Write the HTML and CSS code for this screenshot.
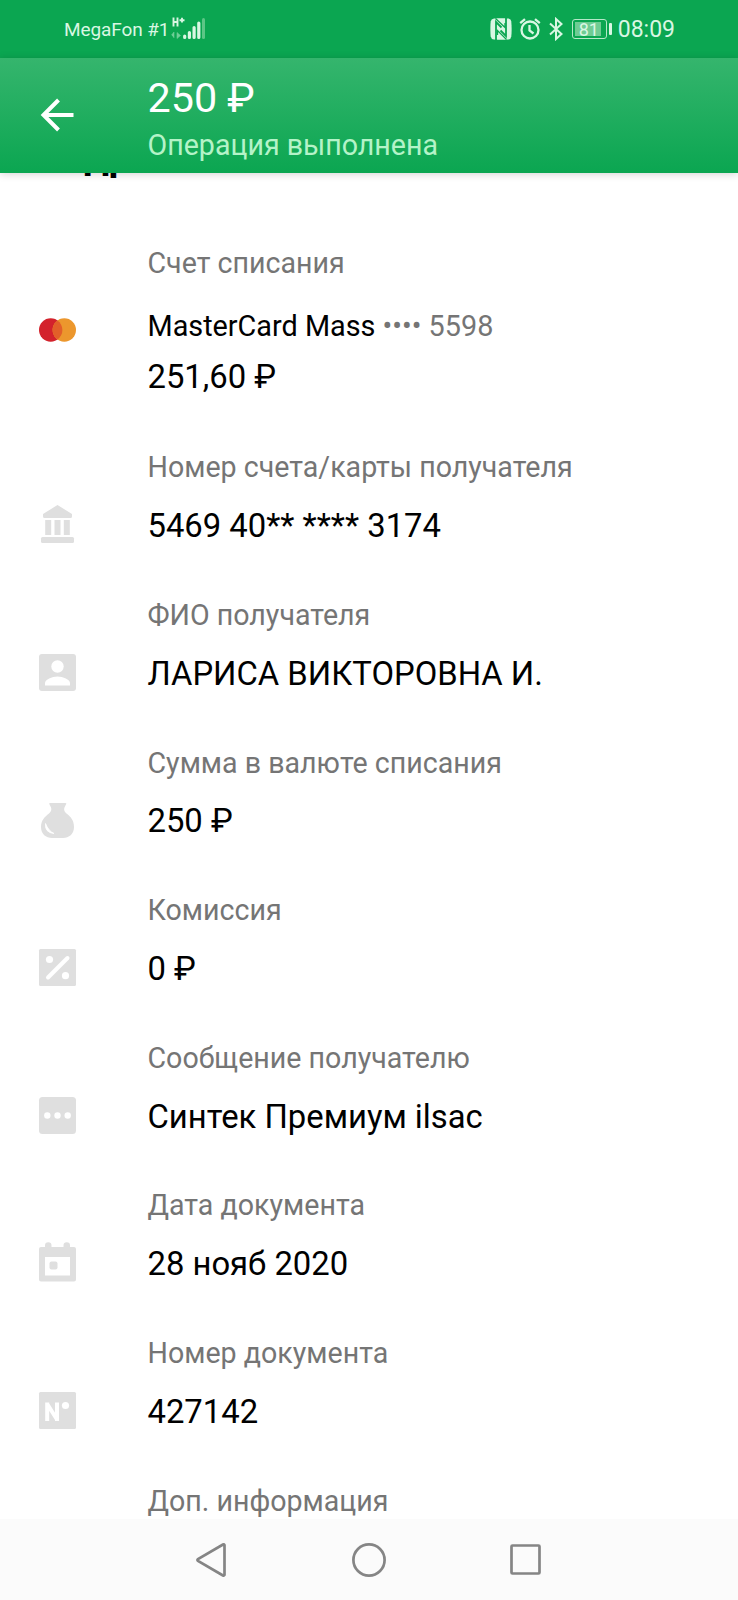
FILE: index.html
```
<!DOCTYPE html>
<html lang="ru">

<head>
    <meta charset="UTF-8">
    <meta name="viewport" content="width=device-width, initial-scale=1.0">
    <title>Операция выполнена</title>
    <link rel="stylesheet" href="styles.css">
</head>

<body>
    <div class="status-bar">
        <div class="carrier">MegaFon #1</div>
        <svg class="signal" width="36" height="24" viewBox="0 0 36 24">
            <path d="M2.500 .500v9M6.500 .500v9M2.500 5h4M8.500 3.200h5M11 .800v4.800" fill="none" stroke="#d9f7e3" stroke-width="1.900" />
            <path d="M.500 18l2.500-3v6M6 15.500v6l3.500-3z" fill="#6fcf97" stroke="#6fcf97" stroke-width=".6" />
            <path d="M13.700 20.500v-1.500M18.400 20.500v-5M23.100 20.500v-10M27.800 20.500v-14.500" fill="none" stroke="#d9f7e3" stroke-width="3.200" stroke-linecap="round" />
            <path d="M32.500 20.500v-18" stroke="#5cc686" stroke-width="3" stroke-linecap="round" />
        </svg>
        <div class="status-right">
            <svg width="22" height="22" viewBox="0 0 22 22">
                <path d="M4 0.500C8 0 15 0 18.500 .500Q21 1 21.300 3.500Q22 11 21.300 18.500Q21 21 18.500 21.500Q12 22 4 21.500Q1 21 .700 18.500Q0 11 .700 3.500Q1 1 4 .500z" fill="#d9f7e3" />
                <path d="M6 22V4L11.500 9.500M16 0V18L10.500 12.500" fill="none" stroke="#0ba651" stroke-width="1.800" />
                <path d="M5.500 .500L15 9.500V5M16.500 21.500L7.500 12.500V17" fill="none" stroke="#0ba651" stroke-width="1.300" />
            </svg>
            <svg width="22" height="22" viewBox="0 0 22 22" fill="none" stroke="#d9f7e3" stroke-width="2.300">
                <circle cx="11" cy="12" r="8.500" />
                <path d="M10.500 7v5.500l4 3M1.200 5.200L6 1.200M20.800 5.200L16 1.200" />
            </svg>
            <svg width="16" height="24" viewBox="0 0 16 24" fill="none" stroke="#d9f7e3" stroke-width="2">
                <path d="M2 6.500L13.500 17L8 22V2L13.500 7L2 17.500" />
            </svg>
            <div class="battery">
                <div class="battery-body"><span class="battery-level">81</span></div>
                <div class="battery-cap"></div>
            </div>
            <div class="time">08:09</div>
        </div>
    </div>

    <div class="header">
        <svg class="back" width="36" height="36" viewBox="0 0 36 36" fill="none" stroke="#fff" stroke-width="4">
            <path d="M34.500 18H5M19.500 3L4.500 18L19.500 33" />
        </svg>
        <div>
            <div class="header-sum">250 ₽</div>
            <div class="header-state">Операция выполнена</div>
        </div>
    </div>

    <div class="content">
        <h2>Подробности</h2>

        <div class="row row-card">
            <div class="label">Счет списания</div>
            <svg class="icon" width="38" height="38" viewBox="0 0 38 38">
                <circle cx="11.700" cy="19" r="11.700" fill="#d3222c" />
                <circle cx="25.300" cy="19" r="11.700" fill="#ec972d" />
                <path d="M18.500 9.480a11.700 11.700 0 0 1 0 19.040a11.700 11.700 0 0 1 0-19.040z" fill="#e25f29" />
            </svg>
            <div class="card-name">MasterCard Mass <span class="card-number">•••• 5598</span></div>
            <div class="value">251,60 ₽</div>
        </div>

        <div class="row">
            <div class="label">Номер счета/карты получателя</div>
            <svg class="icon" width="38" height="38" viewBox="0 0 38 38">
                <path d="M18.500-1L33 8v2.500q0 1.500-1.500 1.500h-26Q4 12 4 10.500V8zM6.200 14h6v15h-6zM15.500 14h6v15h-6zM24.800 14h6v15h-6z" />
                <rect x="2" y="31" width="33" height="6" rx="1.500" />
            </svg>
            <div class="value">5469 40** **** 3174</div>
        </div>

        <div class="row">
            <div class="label">ФИО получателя</div>
            <svg class="icon" width="38" height="38" viewBox="0 0 38 38">
                <rect width="37" height="37" rx="3" />
                <circle class="hole" cx="18.500" cy="12.500" r="6.200" />
                <path class="hole" d="M6 31.500v-2.500c0-3.500 7-6.500 12.500-6.500s12.500 3 12.500 6.500v2.500z" />
            </svg>
            <div class="value">ЛАРИСА ВИКТОРОВНА И.</div>
        </div>

        <div class="row">
            <div class="label">Сумма в валюте списания</div>
            <svg class="icon" width="38" height="38" viewBox="0 0 38 38">
                <path d="M11 2h15.500q1.500 0 .500 1.500c-2.500 4-2.500 6 .500 9C32 16 35 19.500 35 26c0 7-5 11-11 11H13C7 37 2 33 2 26c0-6.500 3.500-10 8-13.500c3-3 3-5 .500-9Q9.500 2 11 2z" />
                <path class="hole" d="M6.500 22.500q-1 9 8.500 10q-5.500-2.500-8.500-10z" stroke="#fff" stroke-width=".8" />
            </svg>
            <div class="value">250 ₽</div>
        </div>

        <div class="row">
            <div class="label">Комиссия</div>
            <svg class="icon" width="38" height="38" viewBox="0 0 38 38">
                <rect width="37" height="37" rx="1.500" />
                <circle class="hole" cx="10.500" cy="10.500" r="3.600" />
                <circle class="hole" cx="26.500" cy="26.700" r="3.600" />
                <path d="M9 28.500L28.500 9" stroke="#fff" stroke-width="4" stroke-linecap="round" />
            </svg>
            <div class="value">0 ₽</div>
        </div>

        <div class="row">
            <div class="label">Сообщение получателю</div>
            <svg class="icon" width="38" height="38" viewBox="0 0 38 38">
                <rect width="37" height="37" rx="3.500" />
                <circle class="hole" cx="8.300" cy="18.500" r="3.200" />
                <circle class="hole" cx="18.500" cy="18.500" r="3.200" />
                <circle class="hole" cx="28.700" cy="18.500" r="3.200" />
            </svg>
            <div class="value">Синтек Премиум ilsac</div>
        </div>

        <div class="row">
            <div class="label">Дата документа</div>
            <svg class="icon" width="38" height="38" viewBox="0 0 38 38">
                <path d="M6 3V1.500a3 3 0 0 1 6.500 0V3h12V1.500a3 3 0 0 1 6.500 0V3h4q2 0 2 2v30.500q0 2-2 2H2q-2 0-2-2V5q0-2 2-2z" />
                <path class="hole" d="M6 13h25v18.500h-25z" />
                <rect x="10.500" y="17.500" width="8" height="8" rx="2" />
            </svg>
            <div class="value">28 нояб 2020</div>
        </div>

        <div class="row">
            <div class="label">Номер документа</div>
            <svg class="icon" width="38" height="38" viewBox="0 0 38 38">
                <rect width="37" height="37" rx="1.500" />
                <path d="M8.200 29V10.500M18 29V10.500M8.200 12L18 27.500" fill="none" stroke="#fff" stroke-width="4" />
                <circle class="hole" cx="26.500" cy="13.500" r="3.600" />
            </svg>
            <div class="value">427142</div>
        </div>

        <div class="row">
            <div class="label">Доп. информация</div>
        </div>
    </div>

    <div class="nav-bar">
        <svg width="36" height="36" viewBox="0 0 36 36">
            <path d="M29.500 3v30q-.500 1-1.500.500L3 19q-1.200-1 0-2L28 2.500q1-.500 1.500.500z" />
        </svg>
        <svg width="36" height="36" viewBox="0 0 36 36">
            <circle cx="18" cy="18" r="15.600" />
        </svg>
        <svg width="36" height="36" viewBox="0 0 36 36">
            <rect x="3.500" y="3.500" width="28" height="28" rx="1" />
        </svg>
    </div>
</body>

</html>
```
FILE: styles.css
```
* {
    box-sizing: border-box;
}

body {
    margin: 0;
    height: 1600px;
    display: flex;
    flex-direction: column;
    overflow: hidden;
    background: #fff;
    font-family: Roboto, "Noto Sans", sans-serif;
}

svg {
    display: block;
    flex-shrink: 0;
}

.status-bar {
    height: 58px;
    flex-shrink: 0;
    display: flex;
    align-items: center;
    padding: 0 63px;
    background: #0ba651;
    color: #d9f7e3;
}

.carrier {
    font-size: 19px;
    width: 108px;
    padding: 1px 0 0 1px;
    letter-spacing: -0.1px;
    white-space: nowrap;
}

.signal {
    overflow: visible;
}

.status-right {
    margin-left: auto;
    display: flex;
    align-items: center;
    gap: 7px;
}

.battery {
    display: flex;
    align-items: center;
    gap: 2px;
    margin: 0 -1px 0 1px;
}

.battery-body {
    width: 35px;
    height: 20px;
    padding: 2px;
    border: 1.5px solid #b5e8c8;
    border-radius: 3px;
}

.battery-level {
    display: block;
    width: 26px;
    height: 14px;
    padding-left: 4px;
    background: #6fcc93;
    font-size: 18px;
    line-height: 15px;
}

.battery-cap {
    width: 3px;
    height: 12px;
    border-radius: 1px;
    background: #d9f7e3;
}

.time {
    padding-top: 1px;
    font-size: 23px;
}

.header {
    position: relative;
    z-index: 1;
    height: 115px;
    flex-shrink: 0;
    display: flex;
    padding: 15px 0 0 39px;
    background: linear-gradient(#35b56d, #0ba651);
    box-shadow: 0 1px 8px rgba(0, 0, 0, 0.18);
    color: #fff;
}

.back {
    margin: 24px 72.5px 0 0;
}

.header-sum {
    font-size: 41.3px;
    line-height: 51px;
}

.header-state {
    font-size: 28.6px;
    line-height: 42px;
    color: #b4f3c8;
}

.content {
    flex: 1;
    min-height: 0;
    overflow: hidden;
}

/* scrolled almost fully under the header */
h2 {
    margin: -42px 0 61.6px 36px;
    font-size: 39px;
    font-weight: 700;
    line-height: 52px;
    color: #000;
}

.row {
    display: grid;
    grid-template-columns: 108.5px 1fr;
    align-items: center;
    align-content: start;
    row-gap: 18.8px;
    height: 147.67px;
    padding-left: 39px;
}

.row-card {
    row-gap: 0;
    height: 204.6px;
}

.row-card .label {
    margin-bottom: 27.7px;
}

.row-card .value {
    margin-top: 10.4px;
}

.row-card .icon {
    margin: 2.6px 0 -4.6px;
}

.label {
    grid-column: 2;
    font-size: 28.6px;
    line-height: 36px;
    color: #757575;
}

.icon {
    margin-bottom: 2px;
    fill: #dfdfdf;
    overflow: visible;
}

.hole {
    fill: #fff;
}

.card-name {
    font-size: 28.8px;
    line-height: 36px;
    color: #000;
}

.card-number {
    color: #757575;
}

.value {
    grid-column: 2;
    font-size: 32.8px;
    line-height: 44px;
    color: #000;
}

.nav-bar {
    height: 81px;
    flex-shrink: 0;
    display: flex;
    justify-content: center;
    gap: 120.5px;
    padding-top: 23px;
    background: #fbfbfb;
}

.nav-bar svg {
    fill: none;
    stroke: #858585;
    stroke-width: 2.7;
}
```
